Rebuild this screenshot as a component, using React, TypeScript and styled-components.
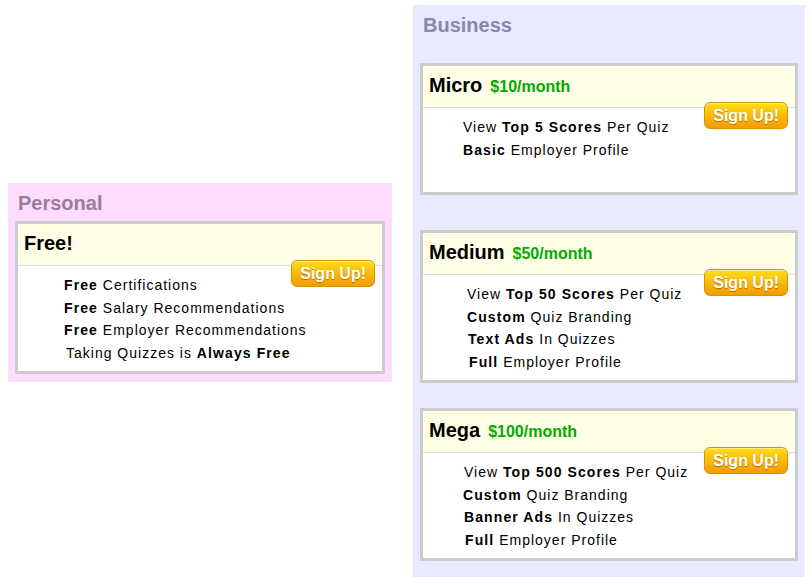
import React from "react";
import styled, { createGlobalStyle } from "styled-components";

const GlobalStyle = createGlobalStyle`
  html, body { margin: 0; padding: 0; background: #ffffff; }
  body { font-family: "Liberation Sans", Arial, Helvetica, sans-serif; color: #000; }
`;

const Page = styled.div`
  display: flex;
  align-items: flex-start;
  gap: 21px;
  padding: 5px 0 0 8px;
`;

const Panel = styled.section<{ $bg: string; $width: number; $top: number; $bottom: number }>`
  box-sizing: border-box;
  width: ${(p) => p.$width}px;
  margin-top: ${(p) => p.$top}px;
  padding: 9px 7px ${(p) => p.$bottom}px;
  background: ${(p) => p.$bg};
`;

const PanelTitle = styled.h2<{ $color: string }>`
  margin: 0 0 0 3px;
  font-size: 20px;
  line-height: 23px;
  font-weight: bold;
  color: ${(p) => p.$color};
`;

const Card = styled.div<{ $gap: number }>`
  position: relative;
  margin-top: ${(p) => p.$gap}px;
  border: 3px solid #cccccc;
  background: #ffffff;
`;

const CardHeader = styled.div`
  box-sizing: border-box;
  height: 42px;
  display: flex;
  align-items: baseline;
  gap: 8px;
  padding: 8px 6px 0;
  background: #ffffe8;
  border-bottom: 1px solid #dddddd;
`;

const PlanName = styled.span`
  font-size: 20px;
  line-height: 23px;
  font-weight: bold;
`;

const Price = styled.span`
  font-size: 16px;
  font-weight: bold;
  color: #00aa00;
`;

const CardBody = styled.div<{ $indent: number; $minHeight?: number }>`
  box-sizing: border-box;
  min-height: ${(p) => (p.$minHeight ? `${p.$minHeight}px` : "0")};
  padding: 8px 0 7px ${(p) => p.$indent}px;
  font-size: 14px;
  line-height: 22.5px;
  letter-spacing: 1px;

  b {
    letter-spacing: 1.1px;
  }
`;

const Feature = styled.div<{ $shift?: number }>`
  padding-left: ${(p) => p.$shift ?? 0}px;
`;

const SignUp = styled.button`
  position: absolute;
  top: 36px;
  right: 7px;
  box-sizing: border-box;
  height: 27px;
  padding: 0 8px;
  border: 1px solid #d89200;
  border-radius: 6px;
  background: linear-gradient(to bottom, #ffdf1a 0%, #fbbd0a 45%, #f39c00 100%);
  box-shadow: inset 0 1px 0 rgba(255, 245, 170, 0.7);
  font-family: "Liberation Sans", Arial, Helvetica, sans-serif;
  font-size: 16px;
  font-weight: bold;
  line-height: 25px;
  color: #ffffff;
  text-shadow: 0 1px 1px rgba(150, 80, 0, 0.7);
  cursor: pointer;
`;

type Line = { content: React.ReactNode; shift?: number };

type Plan = {
  name: string;
  price?: string;
  indent: number;
  gap: number;
  minHeight?: number;
  features: Line[];
};

const personal: Plan = {
  name: "Free!",
  indent: 46,
  gap: 6,
  features: [
    { content: <><b>Free</b> Certifications</> },
    { content: <><b>Free</b> Salary Recommendations</> },
    { content: <><b>Free</b> Employer Recommendations</> },
    { content: <>Taking Quizzes is <b>Always Free</b></>, shift: 2 },
  ],
};

const business: Plan[] = [
  {
    name: "Micro",
    price: "$10/month",
    indent: 40,
    gap: 26,
    minHeight: 84,
    features: [
      { content: <>View <b>Top 5 Scores</b> Per Quiz</> },
      { content: <><b>Basic</b> Employer Profile</> },
    ],
  },
  {
    name: "Medium",
    price: "$50/month",
    indent: 44,
    gap: 35,
    features: [
      { content: <>View <b>Top 50 Scores</b> Per Quiz</> },
      { content: <><b>Custom</b> Quiz Branding</> },
      { content: <><b>Text Ads</b> In Quizzes</>, shift: 1 },
      { content: <><b>Full</b> Employer Profile</>, shift: 2 },
    ],
  },
  {
    name: "Mega",
    price: "$100/month",
    indent: 40,
    gap: 25,
    features: [
      { content: <>View <b>Top 500 Scores</b> Per Quiz</>, shift: 1 },
      { content: <><b>Custom</b> Quiz Branding</> },
      { content: <><b>Banner Ads</b> In Quizzes</>, shift: 1 },
      { content: <><b>Full</b> Employer Profile</>, shift: 2 },
    ],
  },
];

function PlanCard({ plan }: { plan: Plan }) {
  return (
    <Card $gap={plan.gap}>
      <CardHeader>
        <PlanName>{plan.name}</PlanName>
        {plan.price && <Price>{plan.price}</Price>}
      </CardHeader>
      <CardBody $indent={plan.indent} $minHeight={plan.minHeight}>
        {plan.features.map((f, i) => (
          <Feature key={i} $shift={f.shift}>
            {f.content}
          </Feature>
        ))}
      </CardBody>
      <SignUp type="button">Sign Up!</SignUp>
    </Card>
  );
}

export default function App() {
  return (
    <>
      <GlobalStyle />
      <Page>
        <Panel $bg="#fddcfd" $width={384} $top={178} $bottom={8}>
          <PanelTitle $color="#9a7d9a">Personal</PanelTitle>
          <PlanCard plan={personal} />
        </Panel>
        <Panel $bg="#e8eaff" $width={392} $top={0} $bottom={16}>
          <PanelTitle $color="#8888a8">Business</PanelTitle>
          {business.map((p) => (
            <PlanCard key={p.name} plan={p} />
          ))}
        </Panel>
      </Page>
    </>
  );
}
